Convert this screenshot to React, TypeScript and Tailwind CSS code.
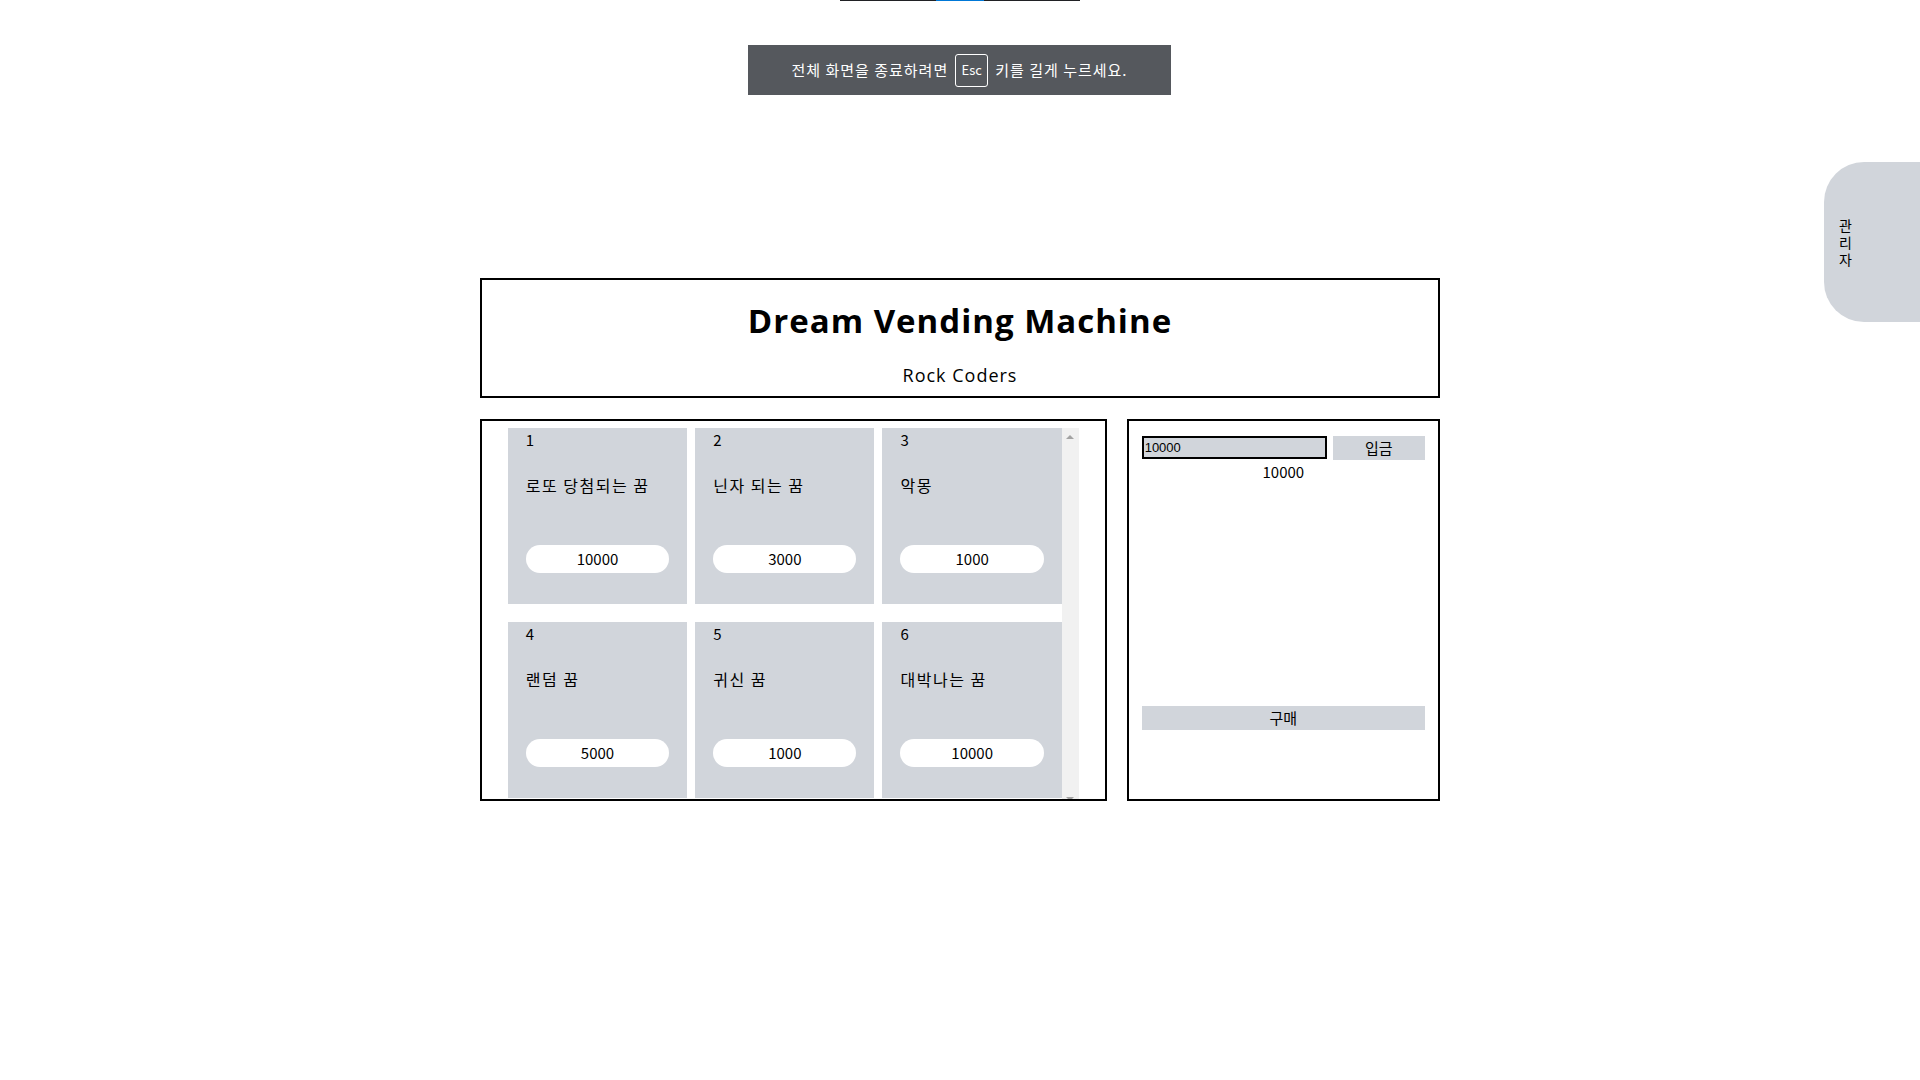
import React from 'react';

const dreams = [
  { id: 1, name: '로또 당첨되는 꿈', price: 10000 },
  { id: 2, name: '닌자 되는 꿈', price: 3000 },
  { id: 3, name: '악몽', price: 1000 },
  { id: 4, name: '랜덤 꿈', price: 5000 },
  { id: 5, name: '귀신 꿈', price: 1000 },
  { id: 6, name: '대박나는 꿈', price: 10000 },
];

function DreamCard({ id, name, price }: { id: number; name: string; price: number }) {
  return (
    <div className="h-[176px] bg-[#d1d5db] px-[18px] pt-[3px] flex flex-col">
      <span className="text-[15px] leading-[18px]">{id}</span>
      <span className="mt-[25px] text-[16px] leading-[22px] tracking-[1.5px]">{name}</span>
      <button className="mt-[49px] h-[28px] w-full rounded-full bg-white text-[15px] leading-[28px] text-center">
        {price}
      </button>
    </div>
  );
}

export default function App() {
  return (
    <div className="relative min-h-[1080px] bg-white text-black font-['Noto_Sans_CJK_KR','Noto_Sans',sans-serif]">
      {/* 전체화면 표시줄 */}
      <div className="absolute left-[840px] top-0 flex h-[1px] w-[240px]">
        <div className="w-[96px] bg-[#202124]" />
        <div className="w-[48px] bg-[#0078d7]" />
        <div className="flex-1 bg-[#202124]" />
      </div>

      {/* 전체화면 종료 안내 */}
      <div className="absolute left-[748px] top-[45px] flex h-[50px] w-[423px] items-center justify-center gap-[7px] bg-[#55585d] text-[15px] tracking-[1px] text-white">
        <span>전체 화면을 종료하려면</span>
        <span className="flex h-[33px] w-[33px] items-center justify-center rounded-[3px] border border-white text-[13px] tracking-normal">
          Esc
        </span>
        <span>키를 길게 누르세요.</span>
      </div>

      {/* 관리자 탭 */}
      <button className="absolute right-0 top-[162px] flex h-[160px] w-[96px] flex-col items-start justify-center rounded-l-[40px] bg-[#d1d5db] pl-[15px] text-[14px] leading-[17px]">
        <span>관</span>
        <span>리</span>
        <span>자</span>
      </button>

      <main className="mx-auto w-[960px] pt-[278px]">
        {/* 헤더 */}
        <header className="h-[120px] border-2 border-black pt-[20px] text-center font-['Open_Sans',sans-serif]">
          <h1 className="text-[33px] font-bold leading-[42px] tracking-[1px]">Dream Vending Machine</h1>
          <p className="mt-[20px] text-[18px] leading-[27px] tracking-[1px]">Rock Coders</p>
        </header>

        <div className="mt-[21px] grid h-[382px] grid-cols-[2fr_1fr] gap-5">
          {/* 상품 목록 */}
          <section className="overflow-hidden border-2 border-black pt-[7px]">
            <div className="flex h-[390px] justify-center">
              <div className="grid w-[554px] grid-cols-3 content-start gap-x-2 gap-y-[18px]">
                {dreams.map((d) => (
                  <DreamCard key={d.id} {...d} />
                ))}
              </div>
              <div className="flex w-[17px] flex-col items-center justify-between bg-[#f1f1f1] pt-[7px] pb-[17px]">
                <span className="h-0 w-0 border-x-[4px] border-b-[4px] border-x-transparent border-b-[#a3a3a3]" />
                <span className="h-0 w-0 border-x-[4px] border-t-[4px] border-x-transparent border-t-[#a3a3a3]" />
              </div>
            </div>
          </section>

          {/* 입금 / 구매 */}
          <section className="border-2 border-black px-[13px] pt-[15px]">
            <div className="grid h-[24px] grid-cols-[2fr_1fr] gap-1.5">
              <input
                defaultValue="10000"
                className="h-[23px] border-2 border-black bg-[#d1d5db] px-[1px] font-['Liberation_Sans',sans-serif] text-[13px] outline-none"
              />
              <button className="bg-[#d1d5db] text-[15px]">입금</button>
            </div>
            <p className="text-center text-[15px] leading-[24px]">10000</p>
            <div className="h-[221px]" />
            <button className="h-[24px] w-full bg-[#d1d5db] text-[15px]">구매</button>
          </section>
        </div>
      </main>
    </div>
  );
}
